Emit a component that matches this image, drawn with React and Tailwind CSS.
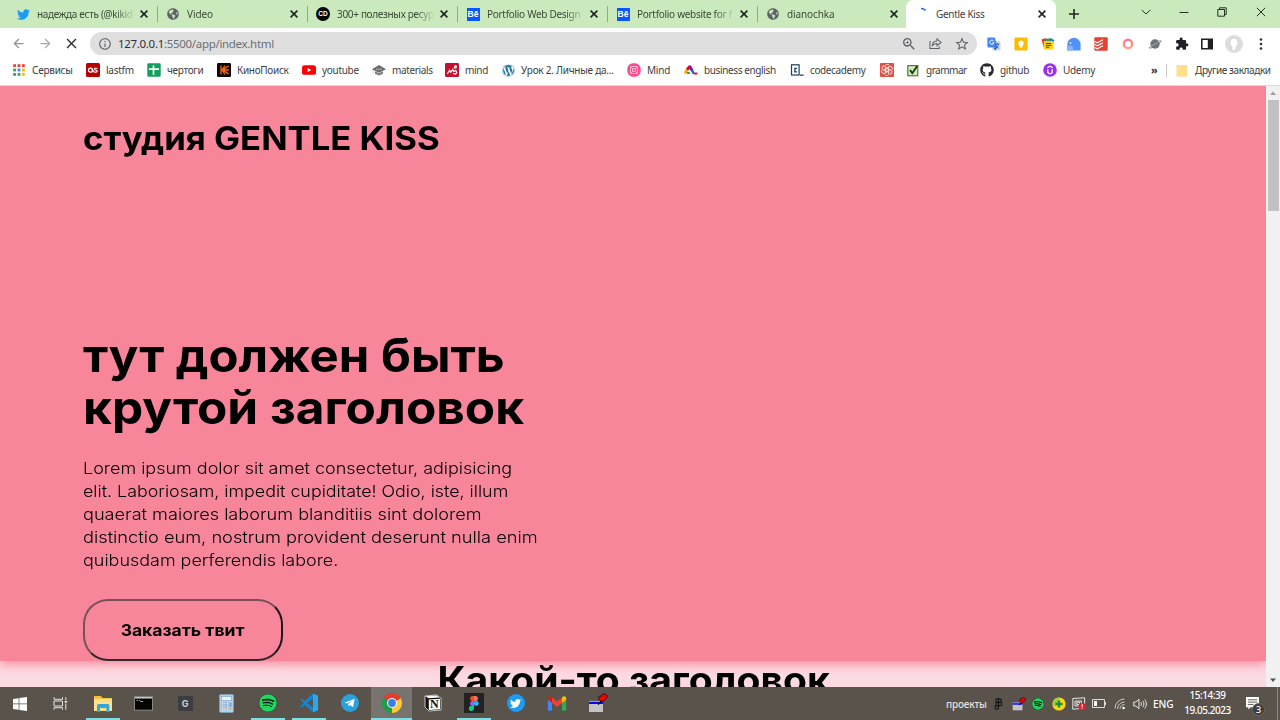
import React from "react";
import { FaTwitter, FaWordpress, FaGithub, FaSpotify, FaGlobeAmericas } from "react-icons/fa";
import { MdZoomIn, MdStarBorder, MdExtension, MdArrowBack, MdArrowForward, MdClose, MdInfoOutline } from "react-icons/md";

const Globe = () => <FaGlobeAmericas className="size-[12px] text-[#5f6368]" />;

const Cross = ({ className }) => (
  <svg viewBox="0 0 12 12" className={className} fill="none" stroke="#202621" strokeWidth="1.6">
    <path d="m2.600 2.600 6.800 6.800M9.400 2.600 2.600 9.400" />
  </svg>
);

const Behance = () => (
  <span className="flex size-[13px] items-center justify-center bg-[#0a56ff] font-['Liberation_Sans',sans-serif] text-[8.5px] leading-none font-bold text-white">Bē</span>
);

const CdLogo = () => (
  <span className="flex size-[14px] items-center justify-center rounded-full bg-black font-['Liberation_Sans',sans-serif] text-[6.5px] leading-none font-bold text-white">CD</span>
);

const TABS = [
  { title: "надежда есть (@kikid", icon: <FaTwitter className="size-[13px] text-[#1d9bf0]" />, sp: "tracking-[-0.32px]" },
  { title: "Video", icon: <Globe />, sp: "tracking-[-0.1px]" },
  { title: "300+ полезных ресур", icon: <CdLogo />, sp: "tracking-[-0.32px]" },
  { title: "Portfolio Web Design", icon: <Behance />, sp: "tracking-[-0.3px]" },
  { title: "Portfolio website for f", icon: <Behance />, sp: "tracking-[-0.3px]" },
  { title: "dianochka", icon: <Globe />, sp: "tracking-[-0.1px]" },
];

function Tab({ title, icon, sp, last }) {
  return (
    <div className="flex h-[28px] w-[150px] shrink-0 items-center">
      <span className="ml-[9px] flex w-[14px] items-center justify-center">{icon}</span>
      <span className={`ml-[7px] w-[98px] overflow-hidden whitespace-nowrap text-[#3a4a36] [mask-image:linear-gradient(to_right,#000_80%,transparent)] ${sp}`}>{title}</span>
      <Cross className="ml-[3px] size-[12px]" />
      <span className={last ? "hidden" : "-mr-px ml-auto h-[16px] w-px bg-[#93a98b]"} />
    </div>
  );
}

const Apps = () => (
  <svg viewBox="0 0 12 12" className="size-[12px]">
    {["#ea4335", "#ea4335", "#ea4335", "#34a853", "#4285f4", "#fbbc05", "#34a853", "#34a853", "#fbbc05"].map((c, i) => (
      <rect key={i} x={(i % 3) * 4.4 + 0.2} y={Math.floor(i / 3) * 4.4 + 0.2} width="2.8" height="2.8" fill={c} />
    ))}
  </svg>
);

const Lastfm = () => (
  <svg viewBox="0 0 14 14" className="size-[14px]">
    <rect width="14" height="14" rx="1.5" fill="#b90000" />
    <circle cx="4.5" cy="7.2" r="2" fill="none" stroke="#fff" strokeWidth="1.3" />
    <path d="M11.4 5.5C9.6 4.8 8 5.4 8.4 6.4c.4.9 3 .6 2.9 1.9-.1 1.2-2.3 1.1-3.6.4L5.8 5.4" fill="none" stroke="#fff" strokeWidth="1.1" />
  </svg>
);

const Sheets = () => (
  <svg viewBox="0 0 14 14" className="size-[14px]">
    <rect x=".3" y=".3" width="13.4" height="13.4" rx="1.2" fill="#12a05c" />
    <path d="M6.5 2.4v9.4M2 6.2h10" stroke="#fff" strokeWidth="1.7" />
  </svg>
);

const Kino = () => (
  <svg viewBox="0 0 14 14" className="size-[14px]">
    <rect width="14" height="14" rx="1.2" fill="#0d0906" />
    <path d="M4 2.5v9M5 7l3-4.3M5 7l3 4.4M6 6.6 11.6 3M6 7h5.8M6 7.4l5.6 3.5" stroke="#f26a12" strokeWidth="1.3" />
  </svg>
);

const Youtube = () => (
  <svg viewBox="0 0 14 10" className="h-[10px] w-[14px]">
    <rect y=".2" width="14" height="9.6" rx="2.6" fill="#f00" />
    <path d="m5.6 2.9 3.8 2.1-3.8 2.1z" fill="#fff" />
  </svg>
);

const Materials = () => (
  <svg viewBox="0 0 14 12" className="h-[12px] w-[14px]">
    <path d="M0 5.2 7 1l7 4.2-7 3.6z" fill="#6a6a6a" />
    <path d="M3 7.2v2.6l4 1.6 4-1.6V7.2L7 9.2z" fill="#7d7d7d" />
    <path d="M4 5.2h6M1.2 6v3.6" stroke="#c4c4c4" strokeWidth=".8" />
  </svg>
);

const MindRed = () => (
  <svg viewBox="0 0 14 14" className="size-[14px]">
    <rect width="14" height="14" rx="1.2" fill="#c4122f" />
    <path d="M2.3 10.8 4.6 7.4l1.2 1.800 2-2.6.9 1.6 2.2-.6.9 2-1.3 1.400-2.6-.5M9 5.6l1.200-2.800 1.200.6-.8 2.400" fill="none" stroke="#fff" strokeWidth="1.2" />
  </svg>
);

const MindPink = () => (
  <svg viewBox="0 0 14 14" className="size-[14px]">
    <rect x=".3" y=".3" width="13.4" height="13.4" rx="5.6" fill="#fb4b8b" />
    <rect x="3.5" y="3.5" width="7" height="7" rx="1.5" fill="none" stroke="#ffc3da" strokeWidth=".9" />
    <circle cx="7" cy="7" r="1.6" fill="none" stroke="#ffc3da" strokeWidth=".9" />
    <path d="m3.2 3.2 2.500 2.500m5.100-2.500-2.500 2.500m-5.100 5.100 2.500-2.500m5.100 2.500-2.500-2.500" stroke="#ffc3da" strokeWidth=".9" />
  </svg>
);

const English = () => (
  <svg viewBox="0 0 14 12" className="h-[12px] w-[14px]" fill="none" strokeLinecap="round">
    <path d="M1.6 8.2 3.4 5.2" stroke="#f7a600" strokeWidth="2.8" />
    <path d="M4 4.6 5.6 2.8" stroke="#e4002b" strokeWidth="3" />
    <path d="M6.200 3 8 6.2" stroke="#7b1fa2" strokeWidth="2.8" />
    <path d="M8.200 6.800 9.2 8.800" stroke="#1e66d0" strokeWidth="2.4" />
    <path d="M10.2 9.4h2.4" stroke="#d9162c" strokeWidth="2" />
    <path d="M3.8 9h1.2" stroke="#2a9d46" strokeWidth="2.2" />
  </svg>
);

const Codecademy = () => (
  <svg viewBox="0 0 14 12" className="h-[12px] w-[14px]" fill="none" stroke="#204056">
    <rect x="1.5" y=".8" width="7.6" height="10.2" strokeWidth="1.2" />
    <path d="M7 4.3H4.9v3.6H7M10 11.200h3.6" strokeWidth="1.3" />
  </svg>
);

const Swirl = () => (
  <svg viewBox="0 0 14 14" className="size-[14px]">
    <rect width="14" height="14" rx="1" fill="#de5246" />
    <g fill="none" stroke="#fff" strokeWidth=".75">
      {[0, 60, 120, 180, 240, 300].map((a) => (
        <path key={a} d="M5.2 6V3.6a2.3 2.3 0 0 1 4.2-1.2M5.2 4.6 8.4 6.2" transform={`rotate(${a} 7 7)`} />
      ))}
    </g>
  </svg>
);

const Grammar = () => (
  <svg viewBox="0 0 12 13" className="h-[13px] w-[12px]">
    <rect x=".8" y="1.6" width="10" height="10.2" fill="#c9f0b4" stroke="#53683f" strokeWidth="1.1" />
    <path d="m3 6 2.3 3.2L10.2 2" fill="none" stroke="#263417" strokeWidth="1.9" />
  </svg>
);

const Udemy = () => (
  <svg viewBox="0 0 14 14" className="size-[14px]">
    <circle cx="7" cy="7" r="6.8" fill="#9a2ff2" />
    <path d="M4.8 6.3v2.200a2.200 2.200 0 0 0 4.4 0V6.300M4.3 4.8 7 3.3l2.7 1.5" fill="none" stroke="#fff" strokeWidth="1.3" />
  </svg>
);

const BOOKMARKS = [
  ["w-[74px]", "Сервисы", <Apps />, "tracking-[-0.25px]"],
  ["w-[61px]", "lastfm", <Lastfm />, "tracking-[-0.25px]"],
  ["w-[70px]", "чертоги", <Sheets />, "tracking-[-0.3px]"],
  ["w-[85px]", "КиноПоиск", <Kino />, "tracking-[-0.3px]"],
  ["w-[70px]", "youtube", <Youtube />, "tracking-[-0.3px]"],
  ["w-[73px]", "materials", <Materials />, "tracking-[-0.35px]"],
  ["w-[56px]", "mind", <MindRed />, "tracking-[-0.3px]"],
  ["w-[126px]", "Урок 2. Личные да...", <FaWordpress className="size-[13px] text-[#21759b]" />, "tracking-[-0.25px]"],
  ["w-[57px]", "Mind", <MindPink />, "tracking-[-0.2px]"],
  ["w-[106px]", "business english", <English />, "tracking-[-0.38px]"],
  ["w-[90px]", "codecademy", <Codecademy />, "tracking-[-0.38px]"],
  ["w-[26px]", "", <Swirl />, ""],
  ["w-[74px]", "grammar", <Grammar />, "tracking-[-0.5px]"],
  ["w-[63px]", "github", <FaGithub className="size-[14px] text-[#24292e]" />, "tracking-[-0.3px]"],
  ["w-[108px]", "Udemy", <Udemy />, "tracking-[-0.3px]"],
];

const Share = () => (
  <svg viewBox="0 0 14 14" className="size-[13px]" fill="none" stroke="#5f6368" strokeWidth="1.1">
    <path d="M2.2 5.2H1v7.2h10V10M3.6 9.2c.3-3.2 2-4.7 5-4.8V2L13 5.8 8.6 9.4V7.1c-2 0-3.6.5-5 2.1z" />
  </svg>
);

const Translate = () => (
  <svg viewBox="0 0 14 14" className="size-[14px]">
    <rect x="5" y="4" width="8.6" height="9.6" rx="1" fill="#d6d9de" />
    <path d="M1 .6h6.8l2.8 9.8H1.2A1 1 0 0 1 .4 9.6V1.2z" fill="#4487f2" />
    <path d="M6.6 4a2.1 2.1 0 1 0 .3 1.8H5.2" fill="none" stroke="#fff" strokeWidth=".9" />
    <path d="M8 7h4.4M10.3 6v1.2M11.6 7.2c-.4 1.9-1.4 3-2.8 4M8.9 8.2c.8 1.6 1.8 2.4 3 3" fill="none" stroke="#2e62bd" strokeWidth=".9" />
    <path d="m6.8 10.4 3.8 0-2.7 3z" fill="#2458b8" />
  </svg>
);

const Keep = () => (
  <svg viewBox="0 0 14 14" className="size-[14px]">
    <rect x=".4" y=".4" width="13.2" height="13.2" rx="1" fill="#fbbc04" />
    <circle cx="7" cy="6.2" r="2.6" fill="#fff" />
    <path d="M5.6 8h2.8v2.6H5.6z" fill="#fff" />
  </svg>
);

const Notes = () => (
  <svg viewBox="0 0 14 14" className="size-[14px]">
    <path d="M.6 2.6 4.6 1l2 8-4 1z" fill="#e53b2f" />
    <path d="M4.6 1.6h7.2v5H4.6z" fill="#24a148" />
    <path d="m8 1 5.4 2-1.8 6z" fill="#2776e6" />
    <path d="M2.8 4h9.8v8.6H2.8z" fill="#ffd51e" />
    <path d="M4.8 6.4h5.6M4.8 8.3h5.6M4.8 10.2h3.6" stroke="#5e4c00" strokeWidth="1" />
  </svg>
);

const Ghost = () => (
  <svg viewBox="0 0 14 14" className="size-[14px]">
    <path d="M.3 13.4V7.8A6.5 6.5 0 0 1 13.6 7v6.4z" fill="#5092f7" />
    <path d="M.3 13.4V8.8l5-.4 1 5z" fill="#84b3fa" />
    <circle cx="3.5" cy="6" r="1" fill="#cfe0ff" />
  </svg>
);

const Todoist = () => (
  <svg viewBox="0 0 14 14" className="size-[14px]">
    <rect x=".3" y=".3" width="13.4" height="13.4" rx="1" fill="#e44332" />
    <path d="m.6 4.4 2.8 1.4 5.6-3M.6 7.4l2.8 1.4 5.6-3M.6 10.4l2.8 1.4 5.6-3" fill="none" stroke="#fff" strokeWidth="1.1" />
  </svg>
);

const Ring = () => (
  <svg viewBox="0 0 14 14" className="size-[14px]">
    <defs><linearGradient id="ring" x1="0" y1="0" x2="0" y2="1"><stop stopColor="#ff7391" /><stop offset="1" stopColor="#ffa38e" /></linearGradient></defs>
    <circle cx="7" cy="7" r="4.2" fill="#fff" stroke="url(#ring)" strokeWidth="2.4" />
  </svg>
);

const Planet = () => (
  <svg viewBox="0 0 14 14" className="size-[14px]">
    <circle cx="7" cy="7" r="4.7" fill="#717477" />
    <path d="M2.600 9.400C.6 11 .8 11.600 3.400 10.800 6.500 9.800 11 7.200 12.600 5.200c1-1.300.4-1.800-1.800-1.200" fill="none" stroke="#717477" strokeWidth=".9" />
    <path d="M3 8.700C5.500 8.300 8.800 6.500 10.600 4.700" stroke="#b9bbbd" strokeWidth=".7" fill="none" />
  </svg>
);

const Panel = () => (
  <svg viewBox="0 0 12 12" className="size-[12px]">
    <path d="M0 .4h12v11.2H0zM1.6 2v8h5.2V2z" fill="#202124" fillRule="evenodd" />
  </svg>
);

const Avatar = () => (
  <svg viewBox="0 0 18 18" className="size-[18px]">
    <circle cx="9" cy="9" r="9" fill="#dcdddf" />
    <path d="M9 3.2a4 4 0 0 1 4 4.4c0 2-1 3.4-2 4.2v3.600a8 8 0 0 1-4 0v-3.600c-1-.8-2-2.2-2-4.2a4 4 0 0 1 4-4.4z" fill="#fff" stroke="#c9cacd" strokeWidth=".6" />
  </svg>
);

const FigmaMark = ({ className, mono }) => (
  <svg viewBox="0 0 12 18" className={className} stroke={mono ? "#111" : "none"} strokeWidth={mono ? 1.6 : 0}>
    <path d="M6 1H4a2.7 2.7 0 0 0 0 5.3h2z" fill={mono ? "none" : "#f24e1e"} />
    <path d="M6 1h2a2.7 2.7 0 0 1 0 5.3H6z" fill={mono ? "none" : "#ff7262"} />
    <path d="M6 6.3H4a2.7 2.7 0 0 0 0 5.3h2z" fill={mono ? "none" : "#a259ff"} />
    <circle cx="8.4" cy="9" r="2.6" fill={mono ? "none" : "#1abcfe"} />
    <path d="M6 11.6H4A2.7 2.7 0 1 0 6 14.4z" fill={mono ? "none" : "#0acf83"} />
  </svg>
);

const Pin = ({ className }) => (
  <svg viewBox="0 0 20 20" className={className}>
    <rect x="1" y="8" width="14" height="11" fill="#c3c3c3" />
    <rect x="1" y="8" width="14" height="3" fill="#0a0af0" />
    <path d="m1 8.400h11" stroke="#e4e4f4" strokeWidth=".7" />
    <path d="m10 11.500 3.200-3" stroke="#000" strokeWidth="1.2" />
    <path d="M10.600 4.800c0-1.600 1.600-2 2.600-1.400C13.400 1.400 15.400.600 17 1c2 .4 2.400 2.200 1.800 3.600-.5 1.200-1.500 1.600-1.900 1.800C16.700 8 15 8.800 13.400 8.300 11.600 7.800 10.600 6.400 10.600 4.800z" fill="#f40000" stroke="#370000" strokeWidth=".9" />
  </svg>
);

const Windows = () => (
  <svg viewBox="0 0 14 14" className="size-[14px]" fill="#fff">
    <path d="M0 2 5.7 1.2v5.4H0zM6.4 1.1 14 0v6.6H6.4zM0 7.3h5.7v5.4L0 11.9zM6.4 7.3H14V14l-7.6-1.1z" />
  </svg>
);

const TaskView = () => (
  <svg viewBox="0 0 15 13" className="h-[13px] w-[15px]" fill="none" stroke="#e8e6e4">
    <path d="M1 .3v2h8.500v-2M1 12.700v-2h8.500v2M1 4h8.500v5H1zM12.800.3v3M12.800 6.500v6.200" />
    <path d="M11.600 4.800h2.600" strokeWidth="1.600" />
  </svg>
);

const Explorer = () => (
  <svg viewBox="0 0 20 17" className="h-[17px] w-[20px]">
    <path d="M1 1h7l1.500 2H19v13H1z" fill="#f4bf35" />
    <path d="M1 3.800h18V16H1z" fill="#ffe08a" />
    <path d="M4 17V10.500A1.500 1.500 0 0 1 5.500 9h9.300a1.500 1.500 0 0 1 1.500 1.500V17h-3v-4H7v4z" fill="#35a7dd" />
  </svg>
);

const Cmd = () => (
  <svg viewBox="0 0 20 15" className="h-[15px] w-[19px]">
    <rect x=".5" y=".5" width="19" height="14" fill="#050505" stroke="#8d8d8d" />
    <path d="M1 1.400h18" stroke="#c4c4c4" strokeWidth="1.800" />
    <path d="M2.500 4.200h1.500m1 0h1l1 1.200h2.500" fill="none" stroke="#d8d8d8" strokeWidth=".8" />
  </svg>
);

const Calc = () => (
  <svg viewBox="0 0 15 19" className="h-[19px] w-[15px]">
    <rect x=".6" y=".6" width="13.800" height="17.800" rx="1" fill="#b8d6ed" stroke="#7e9fba" />
    <rect x="2.300" y="2.300" width="10.400" height="4.200" fill="#e5f4fc" stroke="#739bbb" strokeWidth=".6" />
    {[8.5, 11.2, 13.9].map((y) => [2.5, 5.1, 7.7].map((x) => <rect key={x + "-" + y} x={x} y={y} width="1.800" height="1.800" fill="#f5faff" stroke="#7b9bb5" strokeWidth=".4" />))}
    <rect x="10.500" y="8.500" width="2" height="4.400" fill="#6ba4d5" />
    <rect x="10.500" y="13.900" width="2" height="2" fill="#eba24c" />
  </svg>
);

const Vscode = () => (
  <svg viewBox="0 0 20 20" className="size-[20px]">
    <path d="M14 .6 5.900 8 2.600 5.500 1 6.300 4.700 10 1 13.700l1.600.8L5.900 12l8.100 7.400V14.400L8.300 10 14 5.600z" fill="#1285d3" />
    <path d="m14 .6 5 2.200v14.400l-5 2.200z" fill="#2fa5ef" />
  </svg>
);

const Telegram = () => (
  <svg viewBox="0 0 18 18" className="size-[18px]">
    <circle cx="9" cy="9" r="9" fill="#2aa1dc" />
    <path d="M3.500 8.800 13.700 4.800 12 13.300 9 11.100l-1.500 1.500-.2-2.600 4-3.600-5.200 3.200z" fill="#fff" />
  </svg>
);

const Chrome = () => (
  <svg viewBox="0 0 20 20" className="size-[20px]">
    <path d="M10 10 1.340 5A10 10 0 0 1 18.660 5z" fill="#e33b2e" />
    <path d="M10 10 18.660 5A10 10 0 0 1 10 20z" fill="#fcc934" />
    <path d="M10 10V20A10 10 0 0 1 1.340 5z" fill="#1e9e4a" />
    <path d="M10 5.300h8.820L10 10z" fill="#e33b2e" />
    <path d="M14.100 12.300 10 20 10 10z" fill="#fcc934" />
    <path d="m5.900 12.300-4.560-7.300L10 10z" fill="#1e9e4a" />
    <circle cx="10" cy="10" r="4.900" fill="#fff" />
    <circle cx="10" cy="10" r="3.900" fill="#3a7de8" />
  </svg>
);

const Notion = () => (
  <svg viewBox="0 0 18 18" className="size-[18px]">
    <path d="m1 2 11.500-1L17 4v12L5 17l-4-4z" fill="#111" stroke="#fff" strokeWidth=".7" />
    <path d="m1.500 2.300 11-.8 3 2-11 .8z" fill="#fff" />
    <path d="M4.800 5.400 16 4.700v10.600l-11.200.7z" fill="#fff" />
    <text x="6" y="14.200" className="font-['Liberation_Serif',serif] text-[12px] font-bold" fill="#111">N</text>
  </svg>
);

const TwitterRound = () => (
  <span className="flex size-[18px] items-center justify-center rounded-full bg-[#1d9bf0]"><FaTwitter className="size-[11px] text-white" /></span>
);

const Gmail = () => (
  <svg viewBox="0 0 20 15" className="h-[15px] w-[20px]">
    <path d="M.8 3v10.700c0 .6.4 1 1 1h3.200V6z" fill="#4285f4" />
    <path d="M19.200 3v10.700c0 .6-.4 1-1 1H15V6z" fill="#34a853" />
    <path d="M15 1.500V7l4.200-3.300V2.300c0-1.700-2-2.500-3.200-1.500z" fill="#fbbc04" />
    <path d="M5 7V1.500l5 3.700 5-3.700V7l-5 3.800z" fill="#ea4335" />
    <path d="M.8 2.300v1.400L5 7V1.500L4 .8C2.800-.2.8.6.8 2.300z" fill="#c5221f" />
  </svg>
);

const TASKS = [
  { icon: <Explorer />, bar: "w-[34px]" },
  { icon: <Cmd /> },
  { icon: <span className="flex size-[15px] items-center justify-center bg-[#3b3d40] font-[Inter,sans-serif] text-[9px] font-bold text-[#cfd0d1]">G</span> },
  { icon: <Calc /> },
  { icon: <span className="flex size-[18px] items-center justify-center rounded-full bg-[#191919]"><FaSpotify className="size-[18px] text-[#1ed760]" /></span>, bar: "w-[34px]" },
  { icon: <Vscode />, bar: "w-[34px]" },
  { icon: <Telegram /> },
  { icon: <Chrome />, bar: "w-full", active: true },
  { icon: <Notion /> },
  { icon: <span className="flex size-[20px] items-center justify-center bg-[#222]"><FigmaMark className="h-[17px] w-[12px]" /></span>, bar: "w-[34px]" },
  { icon: <TwitterRound /> },
  { icon: <Gmail /> },
  { icon: <Pin className="size-[20px]" /> },
];

function Taskbar() {
  return (
    <footer className="flex h-[33px] shrink-0 items-stretch bg-[#59534c] text-white">
      <div className="flex w-[40px] items-center justify-center"><Windows /></div>
      <div className="flex w-[42px] items-center pl-[13px]"><TaskView /></div>
      {TASKS.map((t, i) => (
        <div key={i} className={t.active ? "flex w-[41.3px] flex-col items-center bg-[#77736e]" : "flex w-[41.3px] flex-col items-center"}>
          <div className="flex h-[31px] items-center pt-px">{t.icon}</div>
          <div className={t.bar ? `h-[2px] bg-[#7fe0e3] ${t.bar}` : "h-[2px]"} />
        </div>
      ))}
      <div className="ml-auto flex items-center pr-[2px] text-[10px] font-medium">
        <span className="w-[46px] whitespace-nowrap tracking-[-0.2px] text-[#e4e1df]">проекты</span>
        <span className="flex w-[12px] justify-center"><FigmaMark mono className="h-[12px] w-[9px]" /></span>
        <span className="flex w-[29px] justify-center"><Pin className="size-[14px]" /></span>
        <span className="flex w-[10px] justify-center"><span className="flex size-[12px] shrink-0 rounded-full bg-black"><FaSpotify className="size-[12px] text-[#1ed760]" /></span></span>
        <span className="flex w-[31px] justify-center">
          <svg viewBox="0 0 14 14" className="size-[14px]">
            <circle cx="7" cy="7" r="6.600" fill="#f9d71c" />
            <path d="M7 .4A6.600 6.600 0 0 0 .4 7l3 3L8 1z" fill="#9bcf3c" />
            <path d="M7 3.500v7M3.500 7h7" stroke="#1d8b33" strokeWidth="2.300" />
          </svg>
        </span>
        <span className="flex w-[10px] justify-center">
          <svg viewBox="0 0 14 14" className="size-[14px] shrink-0">
            <path d="M.8 1.500 12.600.8v10.400L.8 12.200zM3 4h6.500v5H3zM4.800 5.300h3v2.200h-3z" fill="none" stroke="#e8e8e8" />
            <circle cx="10.200" cy="9.500" r="3.800" fill="#e51d2b" />
            <path d="M10.200 7.200v2.900m0 .7v1" stroke="#fff" strokeWidth="1.100" />
          </svg>
        </span>
        <span className="flex w-[30px] justify-center">
          <svg viewBox="0 0 14 9" className="h-[9px] w-[14px]"><path d="M.5.5h12v8H.5zM13.500 3v3" fill="none" stroke="#ddd" /><rect x="2" y="2" width="3" height="5" fill="#f5f5f5" /></svg>
        </span>
        <span className="flex w-[12px] justify-center">
          <svg viewBox="0 0 12 12" className="size-[12px] shrink-0" fill="none" stroke="#c9c7c4"><path d="M1 10.500A9.500 9.500 0 0 1 10.500 1M3.500 11a7 7 0 0 1 7-7M6 11a4.500 4.500 0 0 1 4.500-4.500" /><circle cx="9.600" cy="10" r="1.300" fill="#fff" stroke="none" /></svg>
        </span>
        <span className="flex w-[27px] justify-center">
          <svg viewBox="0 0 14 12" className="h-[12px] w-[14px]" fill="none" stroke="#e8e6e4"><path d="M.8 4h2L6 1.300v9.400L2.800 8h-2zM7.800 4.200c.8 1 .8 2.600 0 3.600M9.700 2.800c1.600 1.800 1.600 4.600 0 6.400M11.600 1.500c2.300 2.600 2.300 6.400 0 9" /></svg>
        </span>
        <span className="w-[28px] text-[10px] tracking-[-0.1px]">ENG</span>
        <span className="flex w-[53px] flex-col items-center pb-px text-[10px] leading-[15px] whitespace-nowrap tracking-[-0.45px]"><span>15:14:39</span><span>19.05.2023</span></span>
        <span className="relative mr-[18px] ml-[12px] block size-[13px]">
          <svg viewBox="0 0 14 14" className="size-[13px]"><path d="M0 0h14v11H5l-2.500 2.500V11H0z" fill="#fff" /><path d="M2 3h10M2 5.500h10M2 8h6" stroke="#59534c" /></svg>
          <span className="absolute top-[6px] left-[6px] flex size-[13px] items-center justify-center rounded-full border border-[#6b6661] bg-[#3f3e3d] text-[9px] leading-none text-white">3</span>
        </span>
        <span className="h-full w-px bg-[#8a8681]" />
      </div>
    </footer>
  );
}

export default function App() {
  return (
    <div className="flex h-[720px] w-[1280px] flex-col overflow-hidden bg-white font-['Noto_Sans','Open_Sans',sans-serif] text-[10px] leading-none text-[#3c4043]">
      <header className="flex h-[28px] shrink-0 bg-[#cae9bd] pl-[7px] text-[10px] leading-[14px]">
        {TABS.map((t, i) => <Tab key={i} {...t} last={i === 5} />)}
        <div className="-ml-px flex h-[28px] w-[150px] items-center rounded-t-[7px] bg-white">
          <svg viewBox="0 0 14 14" className="ml-[10px] size-[14px]"><path d="M5 1.600c1.700-.1 3.300.6 4.600 1.900" fill="none" stroke="#1a73e8" strokeWidth="1.500" /></svg>
          <span className="ml-[6px] w-[100px] tracking-[-0.3px]">Gentle Kiss</span>
          <Cross className="size-[12px]" />
        </div>
        <svg viewBox="0 0 12 12" className="mt-[8px] ml-[12px] size-[12px]" stroke="#202621" strokeWidth="1.600"><path d="M6 1v10M1 6h10" /></svg>
        <div className="ml-auto flex items-center pb-[4px] text-[#273123]">
          <svg viewBox="0 0 10 10" className="mr-[28px] size-[10px]" fill="none" stroke="currentColor"><path d="m.8 3 4.200 4L9.200 3" /></svg>
          <svg viewBox="0 0 10 10" className="mr-[28px] size-[10px]" fill="none" stroke="currentColor"><path d="M.5 5.500h9" /></svg>
          <svg viewBox="0 0 10 10" className="mr-[29px] size-[10px]" fill="none" stroke="currentColor"><path d="M.8 2.500h6.700v6.700H.8zM2.500 2.500V.8h6.700v6.700H7.500" /></svg>
          <svg viewBox="0 0 10 10" className="mr-[14px] size-[10px]" fill="none" stroke="currentColor"><path d="m.8.8 8.400 8.400M9.200.8.8 9.200" /></svg>
        </div>
      </header>

      <div className="flex h-[31px] shrink-0 items-center pl-[11px]">
        <MdArrowBack className="size-[15px] text-[#8f9194]" />
        <MdArrowForward className="ml-[12px] size-[15px] text-[#a5a7aa]" />
        <MdClose className="ml-[10px] size-[17px] text-[#303236]" />
        <div className="ml-[10px] flex h-[23px] w-[887px] items-center rounded-full bg-[#dfdfdf] pl-[8px] text-[#5f6368]">
          <MdInfoOutline className="size-[14px]" />
          <span className="ml-[6px] text-[11.500px] leading-[16px] tracking-[-0.31px] text-[#6c6f73]"><span className="text-[#303236]">127.0.0.1</span>:5500/app/index.html</span>
          <MdZoomIn className="ml-auto size-[16px]" />
          <span className="mx-[12px]"><Share /></span>
          <MdStarBorder className="mr-[7px] size-[16px]" />
        </div>
        <div className="ml-[10px] flex items-center gap-[12.800px]">
          <Translate /><Keep /><Notes /><Ghost /><Todoist /><Ring /><Planet />
          <MdExtension className="size-[14px] text-[#202124]" />
          <Panel />
        </div>
        <span className="ml-[12px]"><Avatar /></span>
        <svg viewBox="0 0 4 12" className="ml-[16px] h-[12px] w-[4px] shrink-0" fill="#303236"><circle cx="2" cy="1.500" r="1.300" /><circle cx="2" cy="6" r="1.300" /><circle cx="2" cy="10.500" r="1.300" /></svg>
      </div>

      <nav className="flex h-[27px] shrink-0 items-center border-b border-[#d9dadc] pb-[4px] pl-[12px] leading-[14px]">
        {BOOKMARKS.map(([w, label, icon, sp], i) => (
          <div key={i} className={`flex shrink-0 items-center whitespace-nowrap ${w}`}>
            <span className="flex w-[14px] shrink-0 justify-center">{icon}</span>
            <span className={`ml-[6px] ${sp}`}>{label}</span>
          </div>
        ))}
        <span className="w-[15px] text-[11px] font-bold text-[#303236]">»</span>
        <span className="h-[13px] w-px bg-[#c5c7ca]" />
        <svg viewBox="0 0 12 13" className="ml-[9px] h-[13px] w-[12px]"><path d="M.5 1h9l1.800 1.600v10H.5z" fill="#ffe08a" /><path d="M9.500 1v2h1.800" fill="#eac560" /></svg>
        <span className="ml-[7px] tracking-[-0.4px] whitespace-nowrap">Другие закладки</span>
      </nav>

      <div className="flex h-[601px] shrink-0">
        <main className="h-[601px] w-[1266px] overflow-hidden bg-[#fcdae2] font-[Inter,'Open_Sans',sans-serif] text-black">
          <section className="flex h-[575px] flex-col items-start bg-[#f7869b] pl-[83px] whitespace-nowrap shadow-[0_3px_10px_#f7869b]">
            <div className="mt-[32px] h-[42px] origin-left scale-x-[1.084] text-[32px] leading-[42px] font-bold">студия GENTLE KISS</div>
            <h1 className="mt-[169px] text-[46px] leading-[52px] font-bold">
              <span className="block w-max origin-left scale-x-[1.066]">тут должен быть</span>
              <span className="block w-max origin-left scale-x-[1.077]">крутой заголовок</span>
            </h1>
            <p className="mt-[24px] text-[16.500px] leading-[22.900px] font-light">
              <span className="block w-max origin-left scale-x-[1.09]">Lorem ipsum dolor sit amet consectetur, adipisicing</span>
              <span className="block w-max origin-left scale-x-[1.082]">elit. Laboriosam, impedit cupiditate! Odio, iste, illum</span>
              <span className="block w-max origin-left scale-x-[1.1]">quaerat maiores laborum blanditiis sint dolorem</span>
              <span className="block w-max origin-left scale-x-[1.105]">distinctio eum, nostrum provident deserunt nulla enim</span>
              <span className="block w-max origin-left scale-x-[1.088]">quibusdam perferendis labore.</span>
            </p>
            <button className="mt-[27px] flex h-[62px] w-[200px] shrink-0 items-center justify-center rounded-[25px] border-2 border-t-[#7b4f58] border-r-[#1d1417] border-b-[#33262a] border-l-[#7b4f58] text-[16px] font-bold"><span className="mr-[2px] scale-x-[1.095]">Заказать твит</span></button>
          </section>
          <h2 className="-mt-[2px] text-center text-[37px] leading-[42px] font-bold"><span className="mr-[-1px] inline-block scale-x-[1.057]">Какой-то заголовок</span></h2>
        </main>
        <aside className="flex w-[14px] flex-col items-center bg-[#f1f1f1]">
          <svg viewBox="0 0 14 14" className="size-[14px]"><path d="m4 9 3-3.500L10 9z" fill="#a0a0a0" /></svg>
          <div className="h-[111px] w-[11px] bg-[#c1c1c1]" />
          <svg viewBox="0 0 14 14" className="mt-auto size-[14px]"><path d="m4 5.500 3 3.500 3-3.500z" fill="#505050" /></svg>
        </aside>
      </div>
      <Taskbar />
    </div>
  );
}
